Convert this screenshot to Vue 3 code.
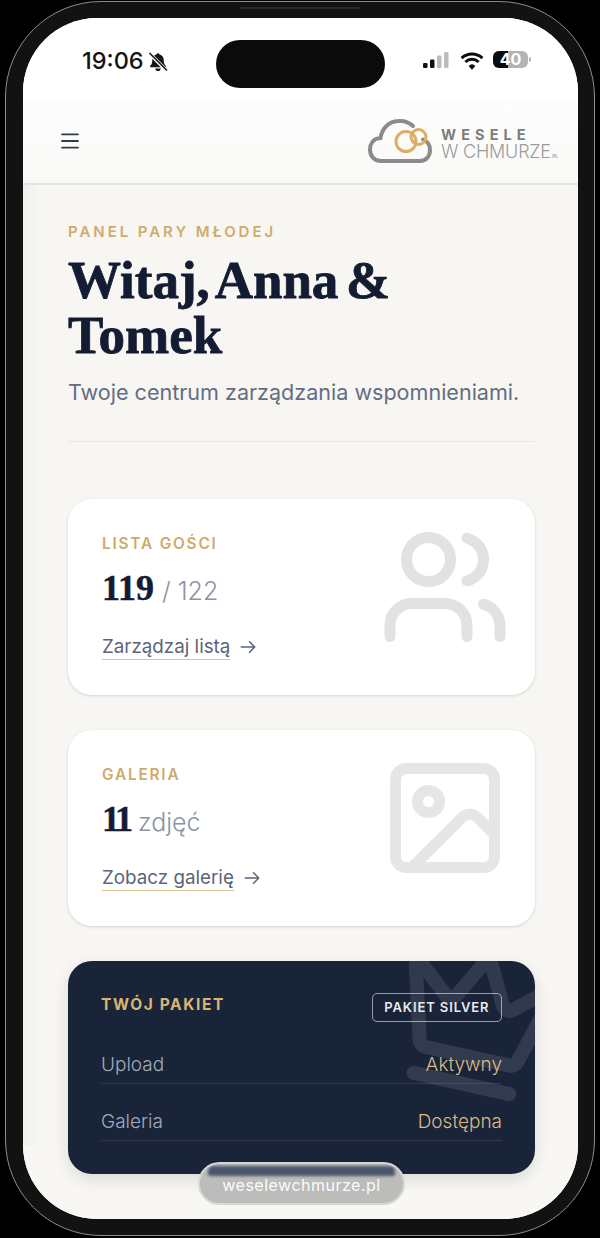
<script setup>
const rows = [
  { name: 'Upload', value: 'Aktywny' },
  { name: 'Galeria', value: 'Dostępna' },
]
</script>

<template>
  <div class="page">
    <div class="speaker"></div>
    <div class="bezel">
      <div class="screen">
        <div class="island"></div>

        <div class="status">
          <span class="time">19:06</span>
          <svg class="bell" viewBox="0 0 20 20" width="20" height="20" fill="#161616">
            <path d="M10 1.2c.8 0 1.4.6 1.5 1.4 2.7.7 4.3 3 4.3 5.8 0 2.6.5 3.900 1.900 5.300.6.6.2 1.600-.7 1.600H3c-.9 0-1.300-1-.7-1.600 1.400-1.400 1.900-2.700 1.900-5.300 0-2.800 1.600-5.100 4.300-5.800.1-.8.7-1.400 1.500-1.400z" />
            <path d="M7.400 16.400h5.200a2.600 2.600 0 0 1-5.200 0z" />
            <path d="M1.500 1.500 18.500 18.500" stroke="#fff" stroke-width="3.600" />
            <path d="M1.500 1 19 18.500" stroke="#161616" stroke-width="1.600" />
          </svg>
          <div class="status-right">
            <svg viewBox="0 0 26 16" width="26" height="16">
              <rect x="0" y="11" width="4.500" height="5" rx="1.200" fill="#111" />
              <rect x="7" y="7.500" width="4.500" height="8.500" rx="1.200" fill="#111" />
              <rect x="14" y="3.500" width="4.500" height="12.500" rx="1.200" fill="#bcbcbc" />
              <rect x="21" y="0" width="4.500" height="16" rx="1.200" fill="#bcbcbc" />
            </svg>
            <svg viewBox="0 0 24 18" width="24" height="18" fill="none" stroke="#0c0c0c" stroke-width="3">
              <path d="M1.600 6.200a15 15 0 0 1 20.800 0" />
              <path d="M5.400 10a9.600 9.600 0 0 1 13.200 0" />
              <path d="M12 17.800 8.600 13.900a5 5 0 0 1 6.800 0z" fill="#0c0c0c" stroke="none" />
            </svg>
            <div class="battery">
              <div class="battery-fill"></div>
              <span class="battery-text">40</span>
            </div>
            <span class="battery-nub"></span>
          </div>
        </div>

        <header class="topbar">
          <svg class="menu" viewBox="0 0 18 16" width="18" height="16" fill="none" stroke="#333a4b" stroke-width="1.800" stroke-linecap="round">
            <path d="M1 1.300h16M1 8h16M1 14.700h16" />
          </svg>
          <div class="logo">
            <svg viewBox="0 0 66 48" width="66" height="48" fill="none">
              <path d="M45 8C41 4 36 2.500 30 3 21 3.500 14 10 12.500 20 5 20.500 2 26 2 31.500 2 38 6 43 13 43H52c6 0 10-4.500 10-11 0-5-3-9-7-10.500" stroke="#8b8b8b" stroke-width="4" stroke-linecap="round" />
              <circle cx="38" cy="23.500" r="10" stroke="#dcae63" stroke-width="3" />
              <circle cx="50.500" cy="19" r="7.500" stroke="#dcae63" stroke-width="3" />
            </svg>
            <div class="logo-text">
              <span class="logo-top">WESELE</span>
              <span class="logo-bottom">W CHMURZE<small>.PL</small></span>
            </div>
          </div>
        </header>

        <main class="content">
          <p class="eyebrow">PANEL PARY MŁODEJ</p>
          <h1 class="title">Witaj, Anna &amp;<br />Tomek</h1>
          <p class="subtitle">Twoje centrum zarządzania wspomnieniami.</p>
          <div class="divider"></div>

          <section class="card">
            <svg class="bg-icon users" viewBox="0 0 24 24" fill="none" stroke-width="2" stroke-linecap="round" stroke-linejoin="round">
              <path d="M16 21v-2a4 4 0 0 0-4-4H6a4 4 0 0 0-4 4v2" />
              <circle cx="9" cy="7" r="4" />
              <path d="M22 21v-2a4 4 0 0 0-3-3.870" />
              <path d="M16 3.130a4 4 0 0 1 0 7.750" />
            </svg>
            <h2 class="label">LISTA GOŚCI</h2>
            <div class="stat"><strong class="num">119</strong><span class="unit">/ 122</span></div>
            <a class="link"><span class="link-text">Zarządzaj listą</span>
              <svg viewBox="0 0 24 24" width="18" height="18" fill="none" stroke="#5b6479" stroke-width="2" stroke-linecap="round" stroke-linejoin="round"><path d="M3 12h18M14 5l7 7-7 7" /></svg>
            </a>
          </section>

          <section class="card">
            <svg class="bg-icon image" viewBox="0 0 24 24" fill="none" stroke-width="2" stroke-linecap="round" stroke-linejoin="round">
              <rect x="3" y="3" width="18" height="18" rx="2" />
              <circle cx="9" cy="9" r="2" />
              <path d="m21 15-3.086-3.086a2 2 0 0 0-2.828 0L6 21" />
            </svg>
            <h2 class="label">GALERIA</h2>
            <div class="stat"><strong class="num tight">11</strong><span class="unit">zdjęć</span></div>
            <a class="link"><span class="link-text">Zobacz galerię</span>
              <svg viewBox="0 0 24 24" width="18" height="18" fill="none" stroke="#5b6479" stroke-width="2" stroke-linecap="round" stroke-linejoin="round"><path d="M3 12h18M14 5l7 7-7 7" /></svg>
            </a>
          </section>

          <section class="plan">
            <svg class="crown" viewBox="0 0 24 24" fill="none" stroke="#fff" stroke-width="2" stroke-linecap="round" stroke-linejoin="round">
              <path d="M11.562 3.266a.5.5 0 0 1 .876 0L15.390 8.870a1 1 0 0 0 1.516.294L21.183 5.500a.5.5 0 0 1 .798.519l-2.834 10.246a1 1 0 0 1-.956.734H5.810a1 1 0 0 1-.957-.734L2.020 6.020a.5.5 0 0 1 .798-.519l4.276 3.664a1 1 0 0 0 1.516-.294z" />
              <path d="M5 21h14" />
            </svg>
            <div class="plan-head">
              <h2 class="plan-title">TWÓJ PAKIET</h2>
              <span class="badge">PAKIET SILVER</span>
            </div>
            <div v-for="row in rows" :key="row.name" class="plan-row">
              <span class="plan-name">{{ row.name }}</span>
              <span class="plan-value">{{ row.value }}</span>
            </div>
          </section>
        </main>

        <div class="url-pill"><span>weselewchmurze.pl</span></div>
      </div>
    </div>
  </div>
</template>

<style>
html, body { margin: 0; background: #000; }
</style>

<style scoped>
* { box-sizing: border-box; }
.page {
  position: relative;
  width: 600px;
  height: 1238px;
  background: #000;
  padding: 1px 5px 2px;
  overflow: hidden;
  font-family: Inter, "Noto Sans", sans-serif;
}
.speaker {
  position: absolute;
  left: 240px;
  top: 7px;
  width: 120px;
  height: 2px;
  background: #2a2a2a;
  z-index: 2;
}
.bezel {
  height: 100%;
  border: 1px solid #8d8d8d;
  border-radius: 96px;
  background: #121212;
  padding: 16px 16px 16px 17px;
}
.screen {
  position: relative;
  height: 100%;
  border-radius: 74px;
  overflow: hidden;
  background: #f8f7f3;
  display: flex;
  flex-direction: column;
}
.island {
  position: absolute;
  left: 193px;
  top: 22px;
  width: 169px;
  height: 48px;
  border-radius: 24px;
  background: #0b0b0b;
}
.status {
  height: 83px;
  flex: none;
  background: #fff;
  display: flex;
  align-items: flex-start;
  padding: 29px 0 0 59px;
}
.time {
  font-size: 23.500px;
  font-weight: 500;
  line-height: 28px;
  color: #141414;
}
.bell { margin: 5px 0 0 4px; }
.status-right {
  margin-left: auto;
  margin-right: 47px;
  display: flex;
  gap: 11px;
  align-items: flex-start;
  padding-top: 5px;
}
.battery {
  position: relative;
  width: 35px;
  height: 17px;
  border-radius: 6px;
  background: #b3b3b3;
  margin: -1px 0 0 -2px;
}
.battery-fill {
  width: 15px;
  height: 100%;
  border-radius: 6px 0 0 6px;
  background: #0b0b0b;
}
.battery-text {
  position: absolute;
  left: 0;
  right: 0;
  top: 0;
  text-align: center;
  font-size: 16px;
  line-height: 17px;
  font-weight: 700;
  color: #fff;
}
.battery-nub {
  width: 2px;
  height: 5px;
  margin: 5px 0 0 -10px;
  border-radius: 0 2px 2px 0;
  background: #b3b3b3;
}
.topbar {
  height: 84px;
  flex: none;
  background: linear-gradient(#fdfdfd, #f9f9f7);
  border-bottom: 2px solid #e3e4e4;
  display: flex;
  align-items: center;
  justify-content: space-between;
  padding: 0 19px 2px 38px;
}
.logo {
  display: flex;
  align-items: center;
  gap: 7px;
  margin-top: 2px;
}
.logo-text {
  display: flex;
  flex-direction: column;
  width: 118px;
  padding-top: 8px;
}
.logo-top {
  font-size: 14.500px;
  line-height: 16px;
  font-weight: 700;
  letter-spacing: 5.100px;
  color: #7c7c7c;
}
.logo-bottom {
  font-size: 18px;
  line-height: 18px;
  font-weight: 300;
  letter-spacing: -.2px;
  color: #9b9b9b;
  white-space: nowrap;
}
.logo-bottom small {
  font-size: 5px;
  font-weight: 600;
}
.content {
  flex: 1;
  min-height: 0;
  padding: 38px 43px 0 45px;
  background: linear-gradient(90deg, #f0f0ed, #f7f6f3 16px) 0 0 / 100% 960px no-repeat, #f8f7f3;
}
.eyebrow {
  margin: 0;
  font-size: 15px;
  line-height: 17px;
  font-weight: 600;
  letter-spacing: 2.950px;
  color: #d0ac6c;
}
.title {
  margin: 13px 0 0;
  font-family: "Liberation Serif", serif;
  font-size: 53px;
  line-height: 55px;
  font-weight: 700;
  word-spacing: -5.500px;
  color: #141c33;
  -webkit-text-stroke: .8px #141c33;
}
.subtitle {
  margin: 14px 0 0;
  font-size: 21.550px;
  line-height: 30px;
  color: #646d83;
}
.divider {
  height: 1px;
  background: #ece8dc;
  margin-top: 34px;
}
.card {
  position: relative;
  height: 196px;
  margin-top: 35px;
  padding: 36px 34px 0;
  border-radius: 24px;
  background: #fff;
  box-shadow: 0 1px 3px rgba(20, 28, 51, .16);
  overflow: hidden;
}
.divider + .card { margin-top: 57px; }
.bg-icon {
  position: absolute;
  top: 22px;
  right: 24px;
  width: 132px;
  height: 132px;
}
.users { stroke: #e2e2e2; }
.image { stroke: #e5e6e8; }
.label {
  margin: 0;
  font-size: 15.400px;
  line-height: 18px;
  font-weight: 600;
  letter-spacing: 1.800px;
  color: #cdaa6d;
}
.stat {
  display: flex;
  align-items: baseline;
  gap: 8px;
  margin-top: 14px;
  height: 42px;
}
.num {
  font-family: "Liberation Serif", serif;
  font-size: 36px;
  line-height: 42px;
  font-weight: 700;
  color: #141c33;
  -webkit-text-stroke: .5px #141c33;
}
.tight { letter-spacing: -3px; }
.unit {
  font-size: 25px;
  font-weight: 300;
  color: #8a93a6;
}
.link {
  display: flex;
  align-items: center;
  gap: 9px;
  margin-top: 25px;
  color: #5b6479;
  font-size: 18.800px;
  line-height: 25px;
}
.link-text { border-bottom: 1.500px solid #dcc290; }
.plan {
  position: relative;
  height: 213px;
  margin-top: 35px;
  padding: 29px 33px 0;
  border-radius: 24px;
  background: #1a2439;
  box-shadow: 0 6px 16px rgba(20, 28, 51, .12);
  overflow: hidden;
}
.crown {
  position: absolute;
  top: -23px;
  right: -24px;
  width: 168px;
  height: 168px;
  transform: rotate(12.500deg);
  opacity: .1;
}
.plan-head {
  position: relative;
  display: flex;
  align-items: flex-start;
  justify-content: space-between;
  height: 37px;
}
.plan-title {
  margin: 0;
  font-size: 15.500px;
  line-height: 30px;
  font-weight: 700;
  letter-spacing: 1.600px;
  color: #d9b574;
}
.badge {
  margin-top: 3px;
  height: 29px;
  padding: 0 11.500px;
  border: 1px solid rgba(255, 255, 255, .55);
  border-radius: 5px;
  font-size: 13px;
  line-height: 27px;
  font-weight: 600;
  letter-spacing: .9px;
  color: #e8eaee;
}
.plan-row {
  position: relative;
  display: flex;
  justify-content: space-between;
  align-items: flex-end;
  height: 57px;
  padding-bottom: 6px;
  border-bottom: 1px solid rgba(255, 255, 255, .1);
  font-size: 19px;
  line-height: 24px;
  font-weight: 300;
}
.plan-name { color: #a3abbb; }
.plan-value { color: #d9ba84; }
.url-pill {
  position: absolute;
  left: 175px;
  top: 1144px;
  width: 207px;
  height: 43px;
  border-radius: 22px;
  border: 2px solid #d6d6d4;
  background: #bcbcba;
  overflow: hidden;
  display: flex;
  align-items: center;
  justify-content: center;
  padding-top: 2px;
  color: #fbfbfb;
  font-size: 16px;
  letter-spacing: .5px;
}
.url-pill::before {
  content: "";
  position: absolute;
  left: 8px;
  right: 8px;
  top: 2px;
  height: 10px;
  border-radius: 5px 5px 2px 2px;
  background: #4a556c;
  filter: blur(1.500px);
}
.url-pill span { position: relative; }
</style>
